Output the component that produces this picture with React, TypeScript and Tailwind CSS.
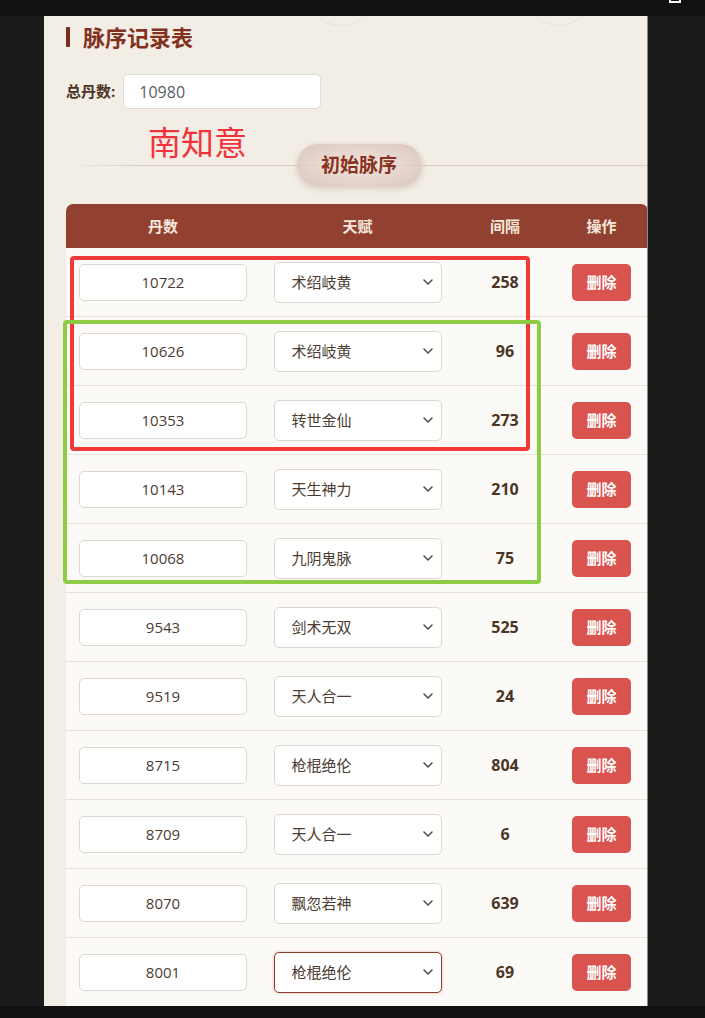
import React, { useState } from 'react';

type Row = { dan: string; talent: string };

const TALENTS = ['术绍岐黄', '转世金仙', '天生神力', '九阴鬼脉', '剑术无双', '天人合一', '枪棍绝伦', '飘忽若神'];

const INITIAL_ROWS: Row[] = [
  { dan: '10722', talent: '术绍岐黄' },
  { dan: '10626', talent: '术绍岐黄' },
  { dan: '10353', talent: '转世金仙' },
  { dan: '10143', talent: '天生神力' },
  { dan: '10068', talent: '九阴鬼脉' },
  { dan: '9543', talent: '剑术无双' },
  { dan: '9519', talent: '天人合一' },
  { dan: '8715', talent: '枪棍绝伦' },
  { dan: '8709', talent: '天人合一' },
  { dan: '8070', talent: '飘忽若神' },
  { dan: '8001', talent: '枪棍绝伦' },
];

const Chevron: React.FC = () => (
  <svg
    className="pointer-events-none absolute right-[9px] top-1/2 -translate-y-1/2"
    width="10"
    height="6"
    viewBox="0 0 10 6"
    fill="none"
  >
    <path d="M1 1l4 4 4-4" stroke="#4a4a4a" strokeWidth="1.5" strokeLinecap="round" strokeLinejoin="round" />
  </svg>
);

const App: React.FC = () => {
  const [total, setTotal] = useState('10980');
  const [rows, setRows] = useState<Row[]>(INITIAL_ROWS);

  const updateRow = (index: number, patch: Partial<Row>) => {
    setRows(prev => prev.map((r, i) => (i === index ? { ...r, ...patch } : r)));
  };

  const removeRow = (index: number) => {
    setRows(prev => prev.filter((_, i) => i !== index));
  };

  // interval = previous dan count minus this one (first row compares with the total)
  const gaps = rows.map((r, i) => {
    const prev = i === 0 ? Number(total) : Number(rows[i - 1].dan);
    return prev - Number(r.dan);
  });

  return (
    <div className="h-[1018px] overflow-hidden bg-[#1b1b1b] font-['Open_Sans','Noto_Sans_CJK_SC',sans-serif]">
      {/* top strip */}
      <div className="relative h-[16px] bg-[#111111]">
        <div className="absolute left-[669px] top-[-9px] h-[12px] w-[12px] border-2 border-white" />
      </div>

      {/* panel */}
      <div className="relative ml-[44px] h-[990px] w-[604px] overflow-hidden border-r border-[#8d8a86] bg-[#f2ede5] pt-[7px]">
        {/* faint decorative circles */}
        <div className="absolute left-[262px] top-[-60px] h-[70px] w-[70px] rounded-full border border-[#e8e1d6]" />
        <div className="absolute left-[480px] top-[-60px] h-[70px] w-[70px] rounded-full border border-[#e8e1d6]" />

        <div className="pl-[22px]">
          {/* title */}
          <div className="flex h-[28px] items-center gap-[13px]">
            <div className="h-[20px] w-[4px] rounded-[1px] bg-[#7a2d1e]" />
            <h1 className="text-[22px] font-bold leading-[28px] text-[#83311f]">脉序记录表</h1>
          </div>

          {/* total */}
          <div className="mt-[23px] flex items-center gap-[8px]">
            <span className="text-[15px] font-bold text-[#4a3426]">总丹数:</span>
            <input
              value={total}
              onChange={e => setTotal(e.target.value)}
              className="h-[35px] w-[198px] rounded-[5px] border border-[#dedad5] bg-white pl-[15px] text-[16px] text-[#5b5d66] outline-none"
            />
          </div>

          {/* section divider */}
          <div className="mt-[35px] flex w-[582px] justify-center bg-[linear-gradient(to_right,transparent,#d9cfc5_12%,#d9cfc5)] bg-[length:100%_1px] bg-center bg-no-repeat pl-[4px]">
            <div className="flex h-[42px] w-[125px] items-center justify-center rounded-full bg-radial from-[#efe4de]/75 to-[#d5bcb1]/80 shadow-[0_2px_6px_rgba(120,70,50,0.22)]">
              <span className="text-[19px] font-bold text-[#88321f]">初始脉序</span>
            </div>
          </div>

          {/* table */}
          <div className="mt-[18px] w-[582px] bg-[#fcfaf7]">
            <div className="grid h-[44px] grid-cols-[194px_195px_100px_93px] items-center rounded-t-[7px] bg-[#924130] text-center text-[15px] font-bold text-[#f6e8dc]">
              <div>丹数</div>
              <div>天赋</div>
              <div>间隔</div>
              <div>操作</div>
            </div>

            {rows.map((row, i) => {
              const focused = i === rows.length - 1;
              return (
                <div
                  key={i}
                  className="grid h-[69px] grid-cols-[194px_195px_100px_93px] items-center border-b border-[#e8e2da]"
                >
                  <div className="flex justify-center">
                    <input
                      value={row.dan}
                      onChange={e => updateRow(i, { dan: e.target.value })}
                      className="h-[37px] w-[168px] rounded-[5px] border border-[#ddd7cf] bg-white text-center text-[15px] text-[#4c3c31] outline-none"
                    />
                  </div>
                  <div className="flex justify-center">
                    <div className="relative h-[41px] w-[168px]">
                      <select
                        value={row.talent}
                        onChange={e => updateRow(i, { talent: e.target.value })}
                        className={
                          focused
                            ? 'h-full w-full appearance-none rounded-[5px] border-[1.5px] border-[#8e3b2b] bg-white pl-[17px] text-[15px] text-[#4c3c31] shadow-[0_0_3px_rgba(142,59,43,0.35)] outline-none'
                            : 'h-full w-full appearance-none rounded-[5px] border border-[#ddd7cf] bg-white pl-[17px] text-[15px] text-[#4c3c31] outline-none'
                        }
                      >
                        {TALENTS.map(t => (
                          <option key={t} value={t}>
                            {t}
                          </option>
                        ))}
                      </select>
                      <Chevron />
                    </div>
                  </div>
                  <div className="text-center text-[16px] font-bold text-[#4a3526]">{gaps[i]}</div>
                  <div className="flex justify-center">
                    <button
                      onClick={() => removeRow(i)}
                      className="h-[37px] w-[59px] rounded-[5px] bg-[#d9534f] text-[15px] font-bold text-white"
                    >
                      删除
                    </button>
                  </div>
                </div>
              );
            })}
          </div>
        </div>

        {/* hand-drawn annotations over the page */}
        <div className="pointer-events-none absolute left-[104px] top-[105px] text-[33px] leading-[40px] text-[#f2333c] font-['Noto_Sans_CJK_SC',sans-serif]">
          南知意
        </div>
        <div className="pointer-events-none absolute left-[26px] top-[240px] h-[195px] w-[460px] rounded-[4px] border-4 border-[#f03a3a]" />
        <div className="pointer-events-none absolute left-[19px] top-[304px] h-[264px] w-[478px] rounded-[4px] border-4 border-[#8dcd45]" />
      </div>

      <div className="h-[12px] bg-[#121212]" />
    </div>
  );
};

export default App;
